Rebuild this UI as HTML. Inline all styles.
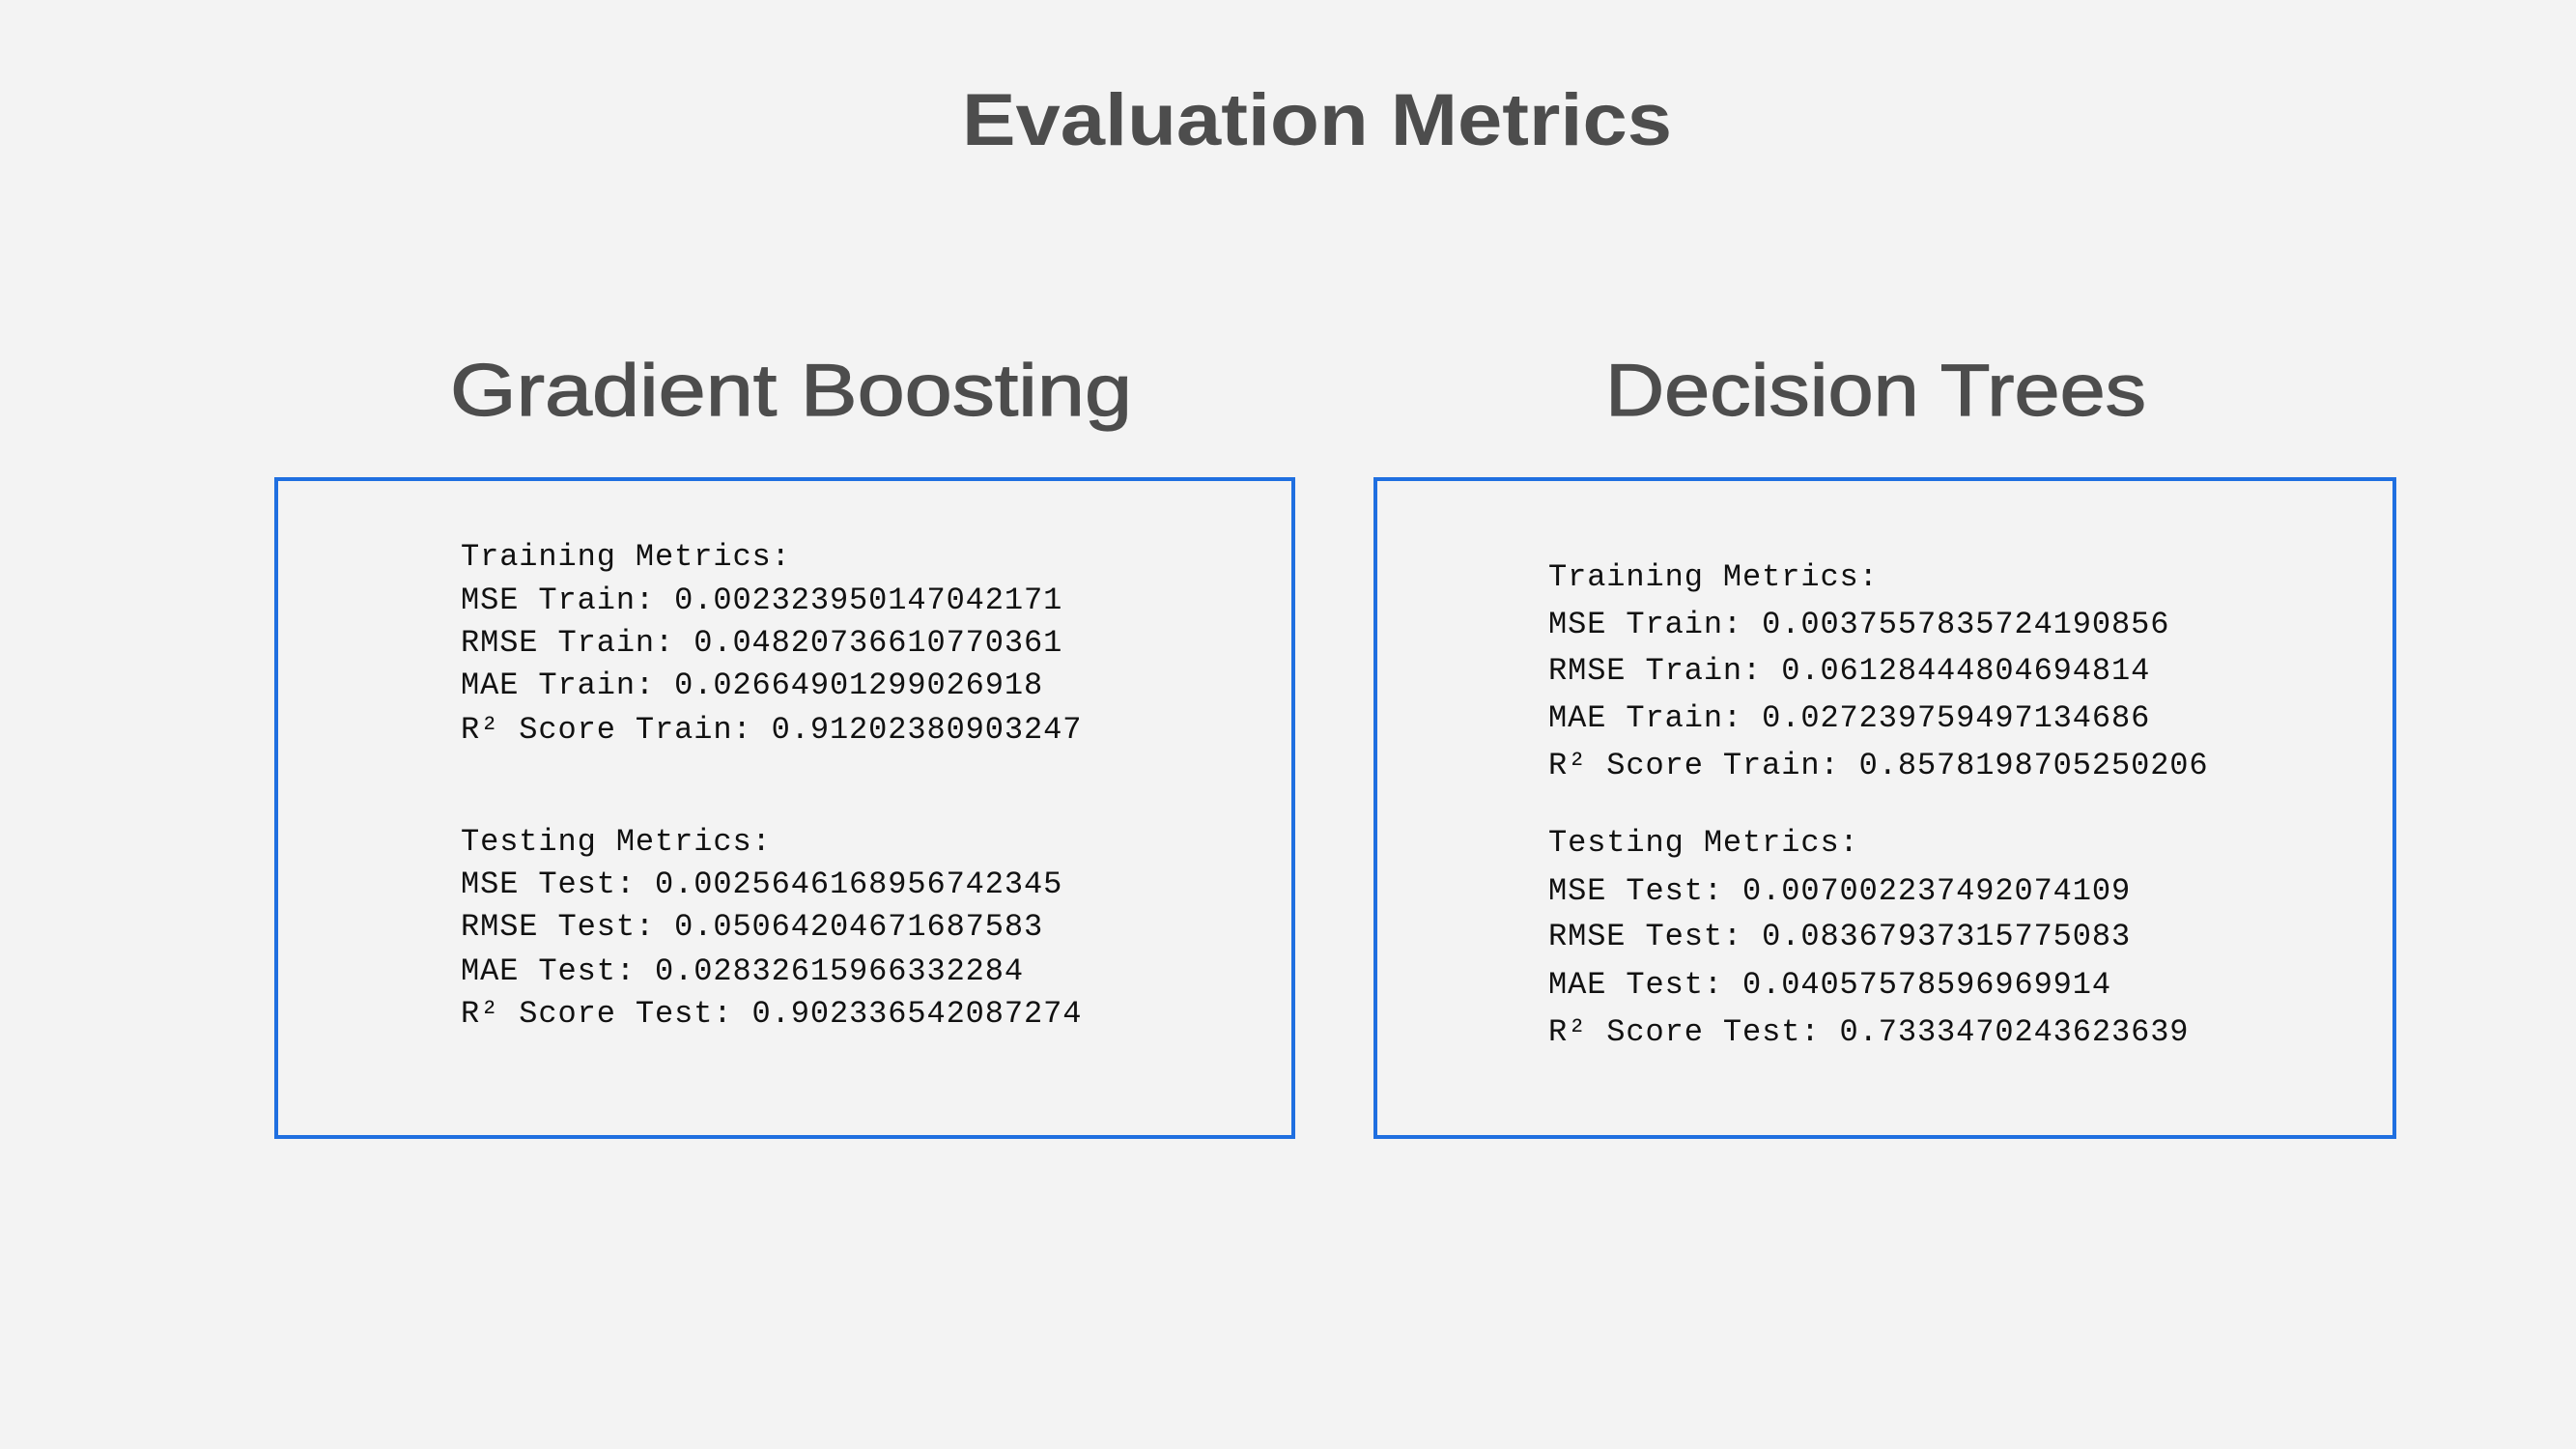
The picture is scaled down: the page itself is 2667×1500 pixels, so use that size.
<!DOCTYPE html>
<html><head><meta charset="utf-8"><style>
html,body{margin:0;padding:0;background:#f3f3f3;}
svg{display:block}
.m{font-family:"Liberation Mono",monospace;font-size:32px;fill:#111;letter-spacing:0.9px}
</style></head><body>
<svg width="2667" height="1500" viewBox="0 0 2667 1500" xmlns="http://www.w3.org/2000/svg">
<rect width="2667" height="1500" fill="#f3f3f3"/>
<text x="996" y="150" textLength="735" lengthAdjust="spacingAndGlyphs" font-family="Liberation Sans, sans-serif" font-weight="bold" font-size="76" fill="#4d4d4d">Evaluation Metrics</text>
<text x="466" y="430" textLength="706" lengthAdjust="spacingAndGlyphs" font-family="Liberation Sans, sans-serif" font-size="76" fill="#4d4d4d" stroke="#4d4d4d" stroke-width="1.2">Gradient Boosting</text>
<text x="1662" y="430" textLength="560" lengthAdjust="spacingAndGlyphs" font-family="Liberation Sans, sans-serif" font-size="76" fill="#4d4d4d" stroke="#4d4d4d" stroke-width="1.2">Decision Trees</text>
<rect x="286" y="496" width="1053" height="681" fill="none" stroke="#1f6fe0" stroke-width="4"/>
<rect x="1424" y="496" width="1055" height="681" fill="none" stroke="#1f6fe0" stroke-width="4"/>
<g class="m">
<text x="477" y="585">Training Metrics:</text>
<text x="477" y="630">MSE Train: 0.002323950147042171</text>
<text x="477" y="674">RMSE Train: 0.04820736610770361</text>
<text x="477" y="718">MAE Train: 0.02664901299026918</text>
<text x="477" y="764">R² Score Train: 0.91202380903247</text>
<text x="477" y="880">Testing Metrics:</text>
<text x="477" y="924">MSE Test: 0.0025646168956742345</text>
<text x="477" y="968">RMSE Test: 0.05064204671687583</text>
<text x="477" y="1014">MAE Test: 0.02832615966332284</text>
<text x="477" y="1058">R² Score Test: 0.902336542087274</text>
<text x="1603" y="606">Training Metrics:</text>
<text x="1603" y="655">MSE Train: 0.0037557835724190856</text>
<text x="1603" y="703">RMSE Train: 0.06128444804694814</text>
<text x="1603" y="752">MAE Train: 0.027239759497134686</text>
<text x="1603" y="801">R² Score Train: 0.8578198705250206</text>
<text x="1603" y="881">Testing Metrics:</text>
<text x="1603" y="931">MSE Test: 0.007002237492074109</text>
<text x="1603" y="978">RMSE Test: 0.08367937315775083</text>
<text x="1603" y="1028">MAE Test: 0.04057578596969914</text>
<text x="1603" y="1077">R² Score Test: 0.7333470243623639</text>
</g>
</svg>
</body></html>
